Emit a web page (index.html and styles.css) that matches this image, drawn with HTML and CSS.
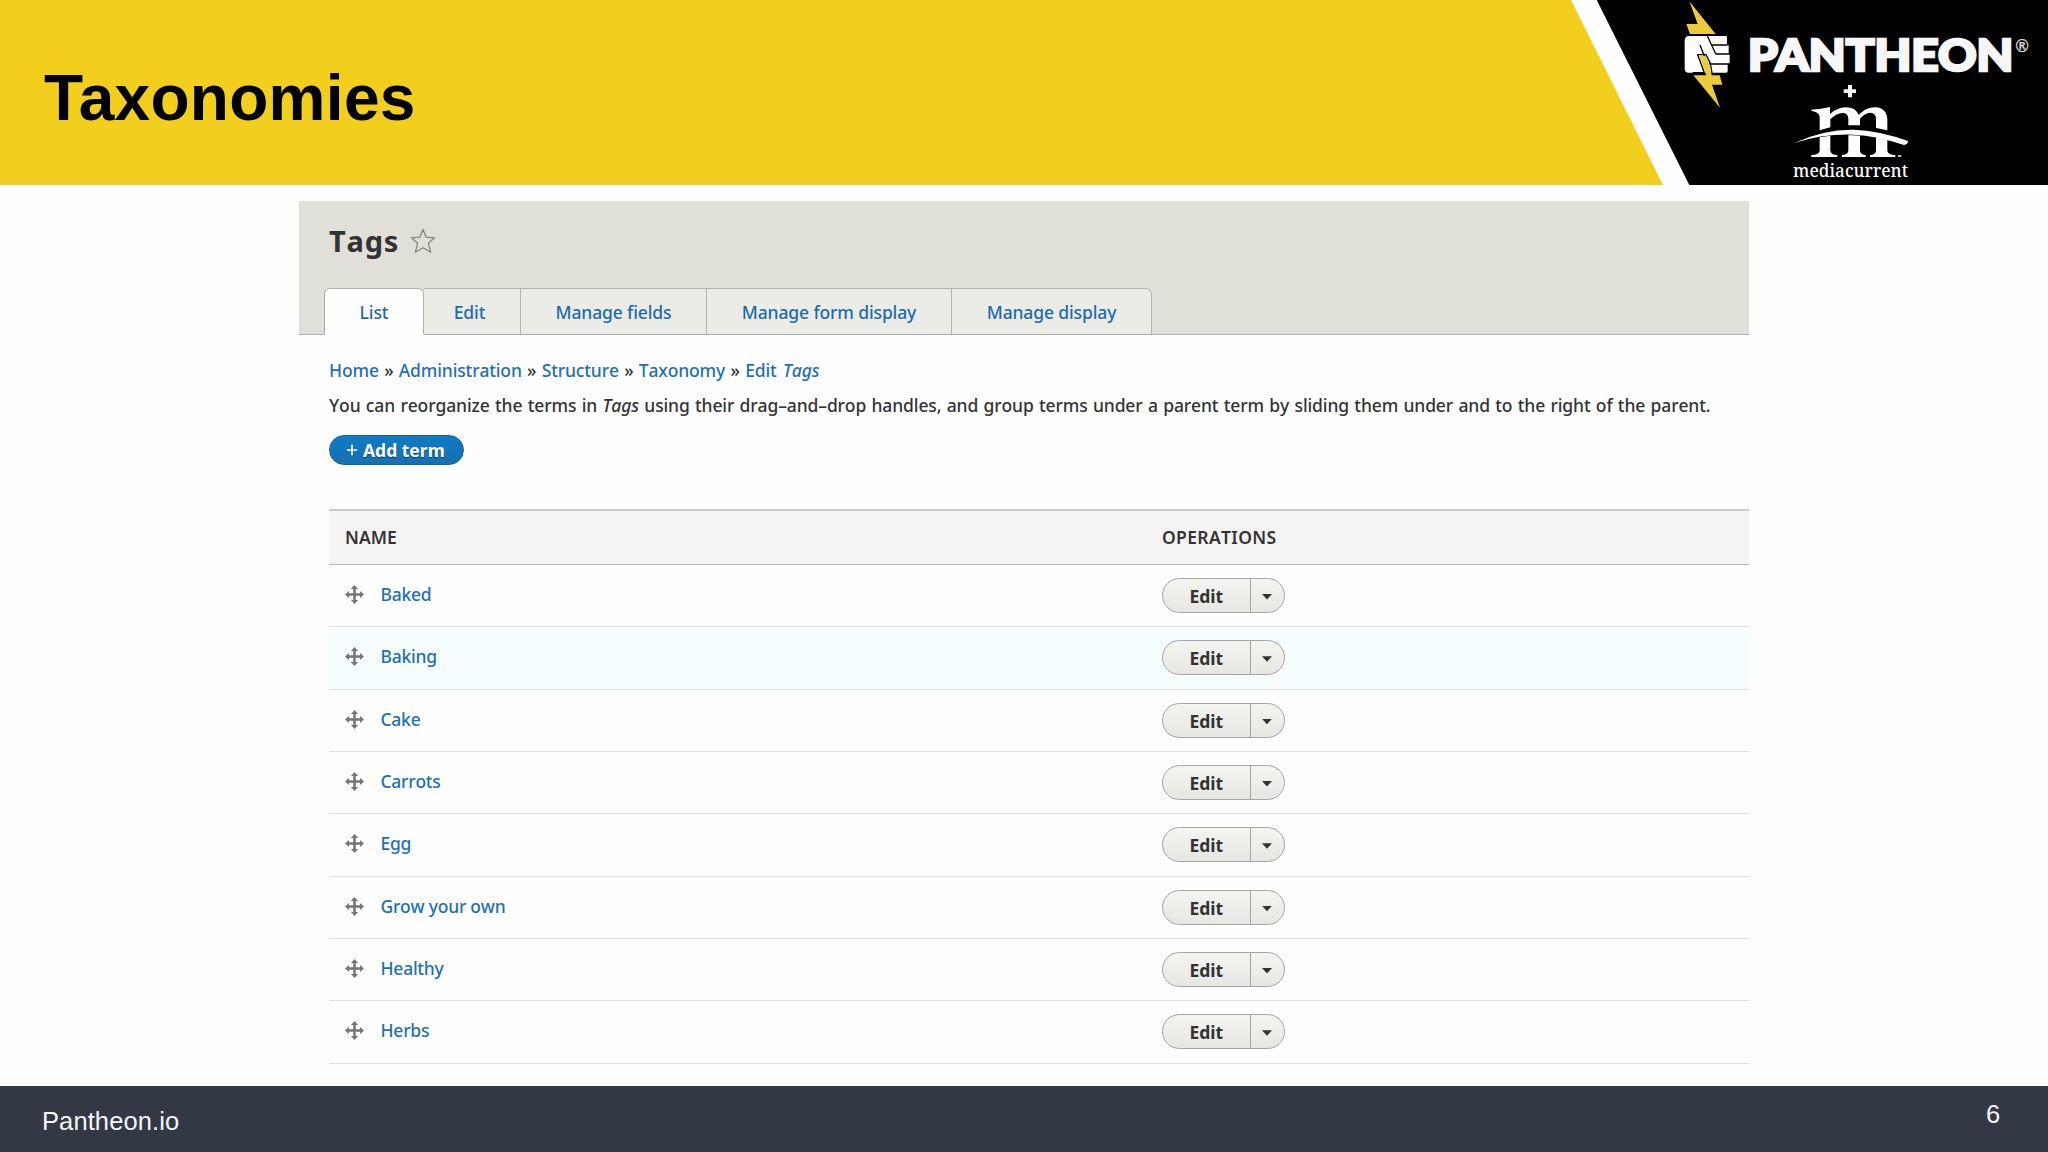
FILE: index.html
```html
<!DOCTYPE html>
<html lang="en">
<head>
<meta charset="utf-8">
<title>Taxonomies</title>
<link rel="stylesheet" href="styles.css">
</head>
<body>
<svg class="defs" aria-hidden="true">
  <symbol id="move" viewBox="0 0 18 18">
    <path d="M9 0 12.4 3.8H10.2V7.8H14.2V5.6L18 9 14.2 12.4V10.2H10.2V14.2H12.4L9 18 5.6 14.2H7.8V10.2H3.8V12.4L0 9 3.8 5.6V7.8H7.8V3.8H5.6Z"/>
  </symbol>
</svg>
<div class="slide">
  <header class="banner">
    <h1 class="banner-title">Taxonomies</h1>
    <svg class="banner-logos" viewBox="0 0 1464 555">
      <path fill="#f1cf1c" d="M0 0H33L309 555H0Z"/>
      <path fill="#000" d="M110 0H1464V555H388Z"/>
      <path fill="#ebcb3a" d="M388 4 467 102H390L379 72H413Z"/>
      <path fill="#fff" d="M384 108H497Q501 108 501 112V134H503Q506 134 506 138V161Q509 162 509 167V187Q509 192 503 192V213Q503 218 498 218H384Q374 216 374 206V122Q375 110 384 108Z"/>
      <path fill="none" stroke="#000" stroke-width="4" d="M442 108 467 161M455 135H503M466 162H507M446 192H507M442 192 420 135M411 164H438L451 190 456 219M413 164 433 218H398"/>
      <path fill="#ebcb3a" d="M418 168H435L449 196 455 226H479L487 254H456L480 323 400 226H439Z"/>
      <text class="pantheon" x="564" y="212" textLength="796" lengthAdjust="spacingAndGlyphs">PANTHEON</text>
      <text class="reg" x="1366" y="156" textLength="41" lengthAdjust="spacingAndGlyphs">®</text>
      <path fill="#f4f4f4" d="M864 255H876V268H888V279H876V292H864V279H851V268H864Z"/>
      <path fill="#fff" d="M754 329Q784 328 810 321V342Q832 322 858 322Q886 322 896 344Q920 321 946 322Q982 324 982 362V391L948 384V358Q948 338 931 338Q914 339 900 356V376Q882 375 865 376V356Q864 339 848 339Q828 340 811 358V382L779 391V350Q778 336 754 332Z"/>
      <path fill="#fff" d="M703 429Q790 388 880 389Q960 392 1044 423Q1044 434 1032 435Q950 407 880 404Q790 401 703 429Z"/>
      <path fill="#fff" d="M779 412 811 407V452Q812 464 832 465V471H754V465Q778 464 779 452ZM865 406Q882 405 900 407V452Q901 464 917 465V471H846V465Q864 464 865 452ZM948 411 982 419V452Q983 464 1006 465V471H930V465Q947 464 948 452ZM1014 466H1024V470H1014Z"/>
      <text class="mediacurrent" x="699" y="530" textLength="345" lengthAdjust="spacingAndGlyphs">mediacurrent</text>
    </svg>
  </header>

  <main class="admin">
    <div class="page-head">
      <div class="page-title">
        <h2>Tags</h2>
        <svg class="star" viewBox="0 0 26 26"><path d="M13 1.4 16.3 9.2 24.6 9.8 18.4 15.3 20.6 24.2 13 19.8 5.4 24.2 7.6 15.3 1.4 9.8 9.7 9.2Z"/></svg>
      </div>
      <nav class="tabs">
        <a class="tab tab-list">List</a>
        <a class="tab tab-edit">Edit</a>
        <a class="tab tab-fields">Manage fields</a>
        <a class="tab tab-form">Manage form display</a>
        <a class="tab tab-display">Manage display</a>
      </nav>
    </div>
    <div class="content">
      <nav class="crumbs"><a>Home</a><i>»</i><a>Administration</a><i>»</i><a>Structure</a><i>»</i><a>Taxonomy</a><i>»</i><a>Edit <em>Tags</em></a></nav>
      <p class="help">You can reorganize the terms in <em>Tags</em> using their drag–and–drop handles, and group terms under a parent term by sliding them under and to the right of the parent.</p>
      <a class="add"><svg viewBox="0 0 12 12"><path d="M6 0.8V11.2M0.8 6H11.2"/></svg>Add term</a>
      <div class="table">
        <div class="row row-head"><span>NAME</span><span class="ops">OPERATIONS</span></div>
        <div class="row"><span class="term"><svg><use href="#move"/></svg><a>Baked</a></span><span class="drop"><b>Edit</b><i></i></span></div>
        <div class="row row-hover"><span class="term"><svg><use href="#move"/></svg><a>Baking</a></span><span class="drop"><b>Edit</b><i></i></span></div>
        <div class="row"><span class="term"><svg><use href="#move"/></svg><a>Cake</a></span><span class="drop"><b>Edit</b><i></i></span></div>
        <div class="row"><span class="term"><svg><use href="#move"/></svg><a>Carrots</a></span><span class="drop"><b>Edit</b><i></i></span></div>
        <div class="row"><span class="term"><svg><use href="#move"/></svg><a>Egg</a></span><span class="drop"><b>Edit</b><i></i></span></div>
        <div class="row"><span class="term"><svg><use href="#move"/></svg><a>Grow your own</a></span><span class="drop"><b>Edit</b><i></i></span></div>
        <div class="row"><span class="term"><svg><use href="#move"/></svg><a>Healthy</a></span><span class="drop"><b>Edit</b><i></i></span></div>
        <div class="row"><span class="term"><svg><use href="#move"/></svg><a>Herbs</a></span><span class="drop"><b>Edit</b><i></i></span></div>
      </div>
    </div>
  </main>

  <footer class="footer"><span class="site">Pantheon.io</span><span class="num">6</span></footer>
</div>
</body>
</html>
```
FILE: styles.css
```css
* { box-sizing: border-box; }
body { margin: 0; background: #fefefe; }
.defs { display: none; }
h1, h2, p { margin: 0; }

.slide {
  width: 2048px;
  height: 1152px;
  display: flex;
  flex-direction: column;
  overflow: hidden;
  font: 480 17.5px/24px "Noto Sans", "Open Sans", sans-serif;
  font-kerning: none;
  letter-spacing: -0.13px;
  color: #333;
}

.banner { display: flex; height: 185px; flex: none; }
.banner-title {
  width: 1560px;
  padding: 62px 0 0 44px;
  background: #f1cf1c;
  color: #000;
  font: bold 64px/73px "Liberation Sans", Arial, sans-serif;
  font-kerning: normal;
  letter-spacing: 0.3px;
}
.banner-logos { width: 488px; height: 185px; display: block; letter-spacing: 0; }
.pantheon { font: 900 130px Lato, sans-serif; fill: #f7f6f8; stroke: #f7f6f8; stroke-width: 8; }
.reg { font: 400 54px Lato, sans-serif; fill: #ddd; stroke: #ddd; stroke-width: 1; }
.mediacurrent { font: 500 56px "Noto Serif", serif; fill: #fff; }

.admin { width: 1450px; margin: 16px 0 0 299px; flex: 1; }
.page-head {
  height: 134px;
  padding: 21px 0 0 25px;
  background: #e0e0d8;
  border-bottom: 1.5px solid #aeaeaa;
  display: flex;
  flex-direction: column;
  justify-content: space-between;
}
.page-title { display: flex; align-items: center; gap: 12px; padding-left: 5px; height: 38px; }
.page-title h2 { width: 69px; font-size: 29px; line-height: 38px; font-weight: 700; letter-spacing: 0.8px; }
.star { width: 26px; height: 26px; }
.star path { fill: none; stroke: #85857c; stroke-width: 1.3; stroke-linejoin: round; }

.tabs { display: flex; height: 47px; margin-bottom: -1px; }
.tab {
  display: flex;
  align-items: center;
  justify-content: center;
  background: #ecece7;
  border: 1px solid #b4b4ae;
  border-left: 0;
  border-bottom-color: #aeaeaa;
  color: #1b6cae;
  padding-top: 1px;
}
.tab-list { width: 100px; background: #fefefe; border-left: 1px solid #a6a6a0; border-bottom-color: #fefefe; border-radius: 6px 6px 0 0; }
.tab-edit { width: 97px; padding-right: 5px; }
.tab-fields { width: 186px; }
.tab-form { width: 245px; }
.tab-display { width: 200px; border-radius: 0 6px 0 0; }

.content { padding-left: 30px; display: flex; flex-direction: column; align-items: flex-start; }
.crumbs { display: flex; margin-top: 23px; color: #333; letter-spacing: -0.15px; }
.crumbs a { color: #1f70b4; word-spacing: 2px; }
.crumbs i { font-style: normal; width: 20px; text-align: center; }
.help { margin-top: 11px; white-space: nowrap; word-spacing: 0.95px; }
.add {
  display: flex;
  align-items: center;
  gap: 5px;
  width: 135px;
  height: 30px;
  margin-top: 18px;
  padding-left: 16px;
  border: 1px solid #1a5f96;
  border-radius: 16px;
  background: linear-gradient(#0d7bc4, #1671b2);
  color: #fff;
  font-weight: 700;
  letter-spacing: 0;
  text-shadow: 0 1px 1px rgba(0, 0, 0, 0.45);
}
.add svg { width: 12px; height: 12px; fill: none; stroke: #fff; stroke-width: 1.7; }

.table { width: 1420px; margin-top: 44px; }
.row {
  display: grid;
  grid-template-columns: 833px 1fr;
  height: 62.33px;
  border-bottom: 1px solid #dfdfdf;
}
.row-head {
  height: 56px;
  align-items: center;
  background: #f5f4f2;
  border-top: 2px solid #ccc;
  border-bottom: 1.5px solid #b9b9b7;
  font-weight: 650;
  letter-spacing: 0;
  padding-bottom: 2px;
}
.row-head span:first-child { padding-left: 16px; }
.ops { letter-spacing: 0.35px; }
.row-hover { background: #f6fdfe; }
.term { display: flex; align-items: flex-start; padding: 17px 0 0 16px; gap: 16.5px; color: #1f70b4; letter-spacing: -0.25px; }
.term svg { width: 19px; height: 19px; margin-top: 3px; fill: #75757a; }
.drop {
  display: flex;
  width: 123px;
  height: 35px;
  margin-top: 13px;
  border: 1.5px solid #a6a6a6;
  border-radius: 18px;
  background: linear-gradient(#f4f4f0, #e6e6e2);
  letter-spacing: 0;
  overflow: hidden;
}
.drop b { width: 88px; border-right: 1px solid #a6a6a6; line-height: 34px; padding-left: 26.5px; }
.drop i { margin: 15px 0 0 11px; width: 10px; height: 5.5px; background: #333; clip-path: polygon(0 0, 100% 0, 50% 100%); }

.footer {
  flex: none;
  display: flex;
  justify-content: space-between;
  height: 66px;
  padding: 0 48px 0 42px;
  background: #323945;
  color: #f2f6fb;
  font: 25.5px/30px "Liberation Sans", Arial, sans-serif;
}
.site { padding-top: 20px; letter-spacing: 0.1px; }
.num { padding-top: 13px; }
```
